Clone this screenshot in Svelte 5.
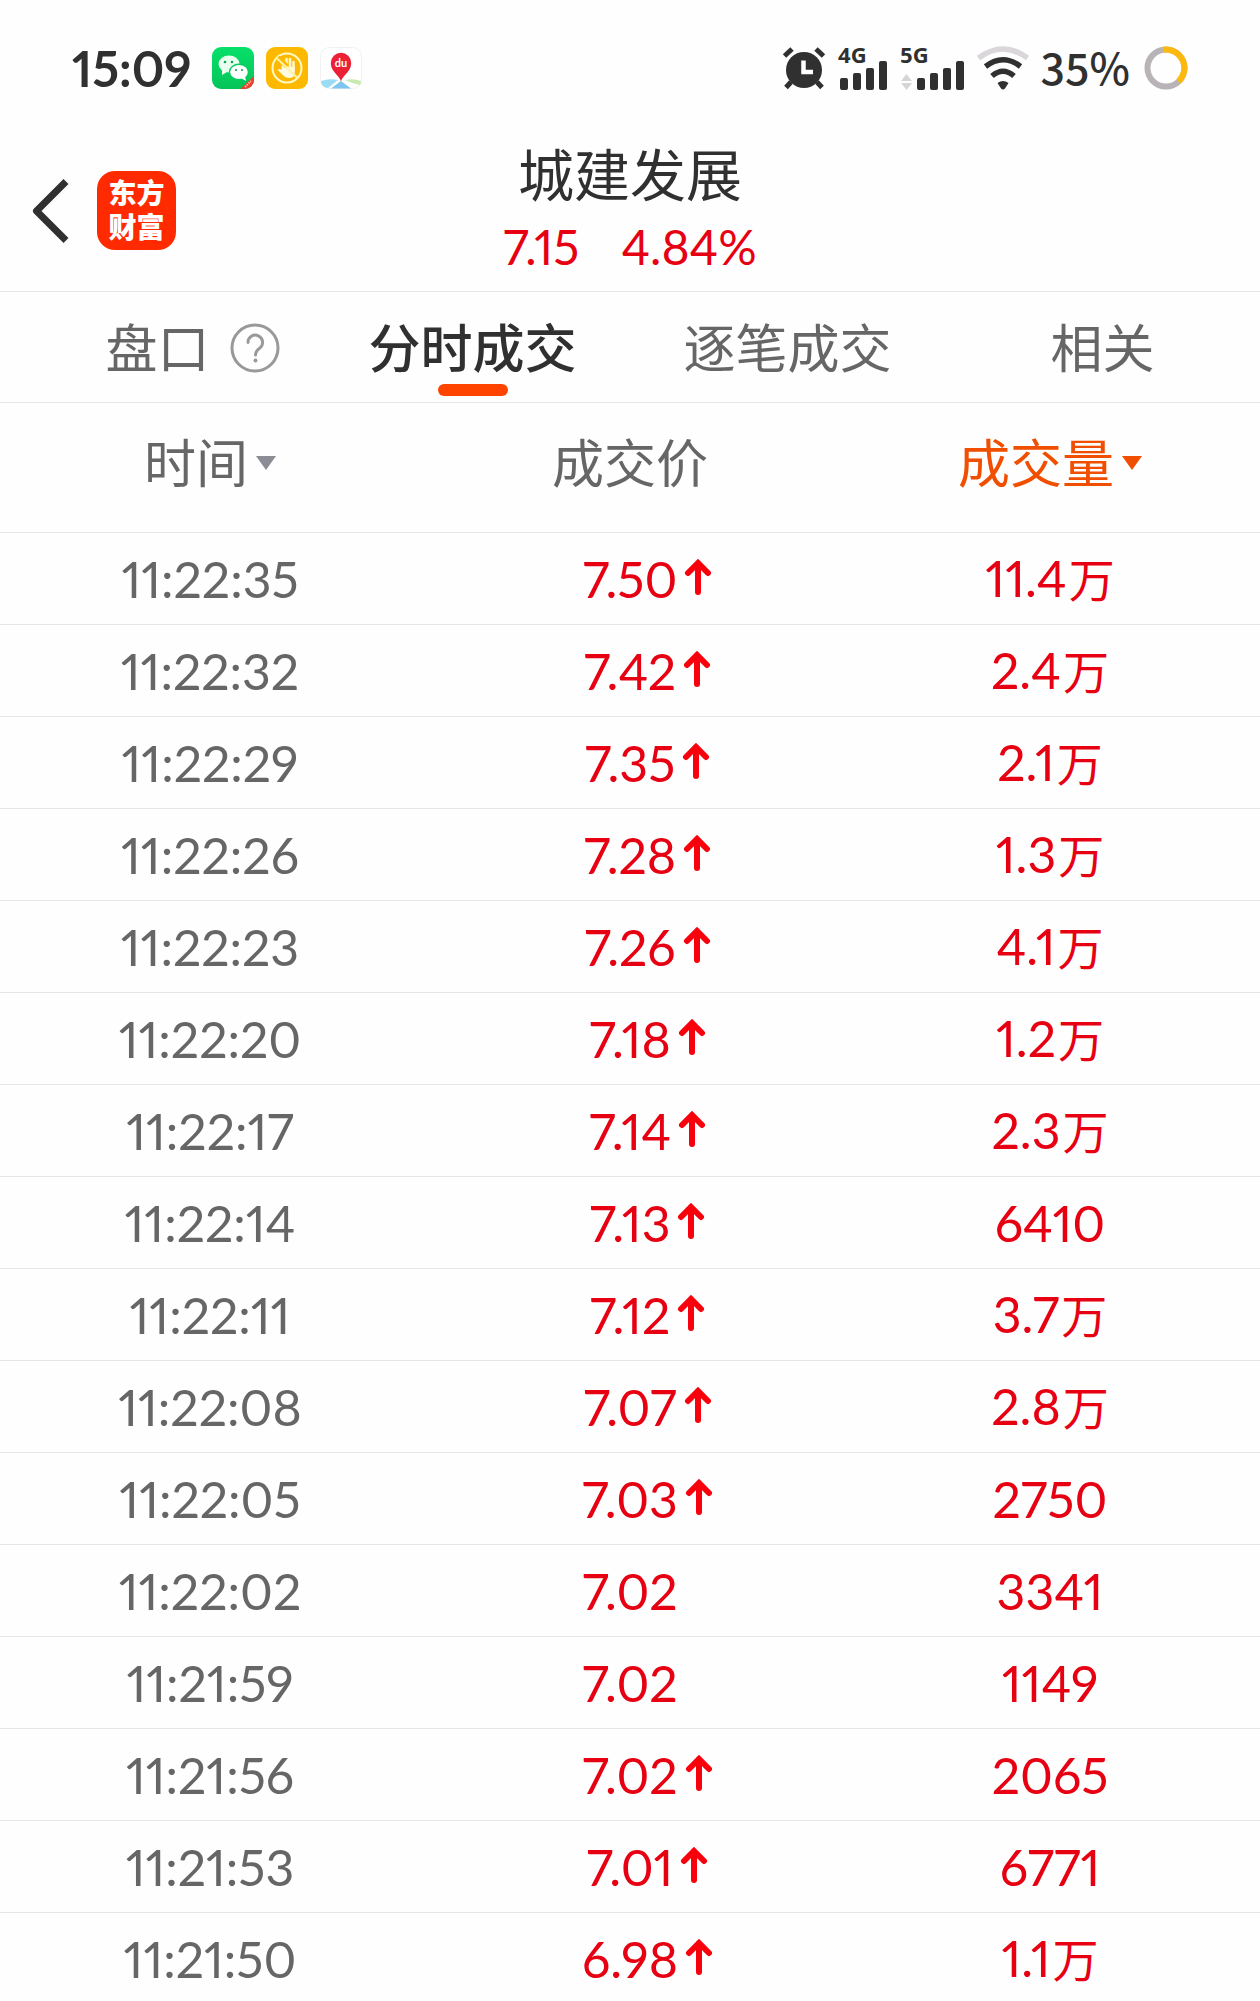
<script>
    const stock = { name: "城建发展", price: "7.15", change: "4.84%" };

    const tabs = [
        { label: "盘口", help: true },
        { label: "分时成交" },
        { label: "逐笔成交" },
        { label: "相关" },
    ];
    let active = 1;

    const columns = [
        { label: "时间", sortable: true },
        { label: "成交价", sortable: false },
        { label: "成交量", sortable: true },
    ];
    let sorted = 2;

    const trades = [
        { time: "11:22:35", price: "7.50", up: true, volume: "11.4", unit: "万" },
        { time: "11:22:32", price: "7.42", up: true, volume: "2.4", unit: "万" },
        { time: "11:22:29", price: "7.35", up: true, volume: "2.1", unit: "万" },
        { time: "11:22:26", price: "7.28", up: true, volume: "1.3", unit: "万" },
        { time: "11:22:23", price: "7.26", up: true, volume: "4.1", unit: "万" },
        { time: "11:22:20", price: "7.18", up: true, volume: "1.2", unit: "万" },
        { time: "11:22:17", price: "7.14", up: true, volume: "2.3", unit: "万" },
        { time: "11:22:14", price: "7.13", up: true, volume: "6410" },
        { time: "11:22:11", price: "7.12", up: true, volume: "3.7", unit: "万" },
        { time: "11:22:08", price: "7.07", up: true, volume: "2.8", unit: "万" },
        { time: "11:22:05", price: "7.03", up: true, volume: "2750" },
        { time: "11:22:02", price: "7.02", up: false, volume: "3341" },
        { time: "11:21:59", price: "7.02", up: false, volume: "1149" },
        { time: "11:21:56", price: "7.02", up: true, volume: "2065" },
        { time: "11:21:53", price: "7.01", up: true, volume: "6771" },
        { time: "11:21:50", price: "6.98", up: true, volume: "1.1", unit: "万" },
    ];
</script>

<div class="status">
    <div class="group">
        <span class="clock">15:09</span>
        <svg class="app" width="42" height="42" viewBox="0 0 42 42">
            <defs>
                <linearGradient id="green" x1="0" y1="0" x2="0" y2="1">
                    <stop offset="0" stop-color="#07e06a" />
                    <stop offset="1" stop-color="#04c458" />
                </linearGradient>
                <clipPath id="tile"><rect width="42" height="42" rx="9" /></clipPath>
            </defs>
            <g clip-path="url(#tile)">
                <rect width="42" height="42" fill="url(#green)" />
                <ellipse cx="17" cy="17" rx="10.5" ry="8.5" fill="#e9ffef" />
                <path d="M10 22l0 6 5-3z" fill="#e9ffef" />
                <ellipse cx="27" cy="25" rx="9.5" ry="7.8" fill="#fff" stroke="#05cd5d" stroke-width="1.4" />
                <path d="M29 31l5 3-1-5z" fill="#fff" />
                <g fill="#0aa54d">
                    <circle cx="13" cy="15" r="1.3" />
                    <circle cx="20" cy="15" r="1.3" />
                    <circle cx="24" cy="23" r="1.1" />
                    <circle cx="30" cy="23" r="1.1" />
                </g>
                <path d="M28 42L42 29V42z" fill="#e8402c" />
                <path d="M33 40l6-6" stroke="#ffb9a8" stroke-width="2" stroke-dasharray="1.5 1" />
            </g>
        </svg>
        <svg class="app" width="42" height="42" viewBox="0 0 42 42">
            <rect width="42" height="42" rx="9" fill="#fdb900" />
            <g fill="none" stroke="#fff8c8" stroke-linecap="round">
                <circle cx="21" cy="21" r="14.5" stroke-width="2" />
                <path d="M17 22V14M20.5 21V12M24 21V12M27.5 22V15" stroke-width="2.6" />
            </g>
            <path d="M15.8 20h13v5q0 6-5.5 6-4 0-6.500-3l-5-5q1-2 4 0z" fill="#fffbe0" />
            <path d="M11.500 10.500L21 19.500" stroke="#fdb900" stroke-width="5" />
            <path d="M10.500 11L31.500 31" stroke="#fff3a8" stroke-width="2" />
        </svg>
        <svg class="app" width="42" height="42" viewBox="0 0 42 42">
            <rect x=".5" y=".5" width="41" height="41" rx="9" fill="#fff" stroke="#f1f1f1" />
            <path d="M1 34q8-3 17-1L8 41Q1 40 1 34z" fill="#9bdcf5" />
            <path d="M25 33q9-2 16 1 0 3-1 4-6-1-15-5z" fill="#c6eab2" />
            <path d="M21 34l10 7.5H11z" fill="#7cc6f0" />
            <path d="M21 34.5C20 29 10.800 25 10.800 16a10.200 10.200 0 0 1 20.400 0C31.200 25 22 29 21 34.500z" fill="#ec2136" />
            <text x="21" y="20" class="pin">du</text>
        </svg>
    </div>

    <div class="group">
        <svg class="alarm" width="44" height="44" viewBox="0 0 44 44" fill="none" stroke="#303030">
            <path d="M2.500 10L10 3M34 3l7.500 7" stroke-width="5" />
            <path d="M9 36l-5 5.500M35 36l5 5.500" stroke-width="5" />
            <circle cx="22" cy="24" r="18" fill="#303030" stroke="none" />
            <path d="M21.500 14.500V26H31" stroke="#fff" stroke-width="4.500" />
        </svg>
        <svg class="cell" width="50" height="64" viewBox="0 -10 50 64" fill="#303030">
            <text x="0" y="17" class="net">4G</text>
            <rect x="2" y="32" width="8" height="12" rx="2" />
            <rect x="15" y="27" width="8" height="17" rx="2" />
            <rect x="28" y="22" width="8" height="22" rx="2" />
            <rect x="41" y="15" width="8" height="29" rx="2" />
        </svg>
        <svg class="cell" width="65" height="64" viewBox="0 -10 65 64" fill="#303030">
            <text x="0" y="17" class="net">5G</text>
            <path d="M1 35L6.500 28 12 35zM1 37L6.500 44 12 37z" fill="#d5d5d5" />
            <rect x="17" y="32" width="8" height="12" rx="2" />
            <rect x="30" y="27" width="8" height="17" rx="2" />
            <rect x="43" y="22" width="8" height="22" rx="2" />
            <rect x="56" y="15" width="8" height="29" rx="2" />
        </svg>
        <svg class="wifi" width="52" height="44" viewBox="0 0 52 44" fill="none" stroke="#303030" stroke-width="5.5">
            <path d="M1.500 12Q26-6 50.500 12" stroke="#dad6da" />
            <path d="M8.500 20.500Q26 7 43.500 20.500" />
            <path d="M15 30Q26 20.500 37 30" />
            <path d="M20.500 37q5.500-4 11 0L28 42.500q-2 2-4 0z" fill="#303030" stroke="none" />
        </svg>
        <span class="battery">35%</span>
        <svg width="44" height="44" viewBox="0 0 44 44" fill="none" stroke-width="6">
            <circle cx="22" cy="22" r="18.5" stroke="#b7b3b6" />
            <path d="M19 3.700A18.500 18.500 0 0 1 34.500 35.500" stroke="#fdb90b" />
        </svg>
    </div>
</div>

<header>
    <button class="back" aria-label="返回">
        <svg width="38" height="66" viewBox="0 0 38 66" fill="none" stroke="#303030" stroke-width="7" stroke-linejoin="round">
            <path d="M34 3.500L4.500 33 34 62.500" />
        </svg>
    </button>
    <a class="logo" href="#home">东方<br />财富</a>
    <div class="stock">
        <h1>{stock.name}</h1>
        <p>
            <span>{stock.price}</span>
            <span>{stock.change}</span>
        </p>
    </div>
</header>

<nav>
    {#each tabs as tab, i}
        <button class:active={i === active} on:click={() => (active = i)}>
            {tab.label}{#if tab.help}<svg class="help" width="50" height="50" viewBox="0 0 50 50" fill="none" stroke="#999" stroke-width="3">
                    <circle cx="25" cy="25" r="23" />
                    <path d="M18 19.500a7.300 7.300 0 1 1 12 5.500q-4.500 3-4.500 7" stroke-linecap="round" />
                    <circle cx="25.5" cy="37.500" r="2" fill="#999" stroke="none" />
                </svg>{/if}
        </button>
    {/each}
</nav>

<table>
    <thead>
        <tr>
            {#each columns as column, i}
                <th class:sorted={i === sorted}>
                    {#if column.sortable}
                        <button on:click={() => (sorted = i)}>
                            {column.label}
                            <svg width="20" height="14" viewBox="0 0 20 14" fill="currentColor">
                                <path d="M0 0h20L10 14z" />
                            </svg>
                        </button>
                    {:else}
                        {column.label}
                    {/if}
                </th>
            {/each}
        </tr>
    </thead>
    <tbody>
        {#each trades as trade}
            <tr>
                <td>{trade.time}</td>
                <td class="red">
                    {trade.price}{#if trade.up}<svg class="up" width="28" height="38" viewBox="0 0 28 38" fill="none" stroke="#f8000c" stroke-width="6" stroke-linecap="round">
                            <path d="M14 4v29M4 14L14 4l10 10" />
                        </svg>{/if}
                </td>
                <td class="red">
                    {trade.volume}{#if trade.unit}<span class="unit">{trade.unit}</span>{/if}
                </td>
            </tr>
        {/each}
    </tbody>
</table>

<style>
    :global(body) {
        background: #fefefe;
        color: #303030;
        font-family: Lato, "Noto Sans CJK SC", sans-serif;
        font-variant-numeric: proportional-nums;
    }
    button {
        border: none;
        background: none;
        padding: 0;
        font: inherit;
        color: inherit;
        cursor: pointer;
    }
    svg {
        flex: none;
    }

    .status {
        display: flex;
        align-items: center;
        justify-content: space-between;
        height: 136px;
        padding: 0 72px;
    }
    .group {
        display: flex;
        align-items: center;
    }
    .clock {
        font-size: 49px;
        font-weight: 700;
        line-height: 60px;
        margin-right: 8px;
    }
    .app {
        margin-left: 12px;
    }
    .pin {
        font-size: 11px;
        font-weight: 700;
        fill: #fff;
        text-anchor: middle;
    }
    .net {
        font-family: "Noto Sans", sans-serif;
        font-size: 22px;
        font-weight: 700;
    }
    .alarm,
    .cell,
    .wifi {
        margin-right: 12px;
    }
    .battery {
        padding-bottom: 4px;
        font-family: "Noto Sans CJK SC", sans-serif;
        font-size: 43px;
        font-weight: 500;
        line-height: 60px;
        margin-right: 14px;
    }

    header {
        display: grid;
        grid-template-columns: auto 1fr auto;
        align-items: center;
        height: 149px;
        padding: 0 32px 6px;
        border-bottom: 1px solid #e6e6e6;
    }
    .back {
        grid-area: 1 / 1;
        display: flex;
        z-index: 1;
    }
    .logo {
        grid-area: 1 / 2;
        z-index: 1;
        width: 79px;
        margin-left: 27px;
        padding: 5px 0 6px;
        box-sizing: border-box;
        border-radius: 18px;
        background: #ff2a00;
        color: #fff;
        font-size: 28px;
        font-weight: 900;
        line-height: 34px;
        text-align: center;
        text-decoration: none;
    }
    .stock {
        grid-area: 1 / 1 / 2 / 4;
        text-align: center;
    }
    h1 {
        margin: 0;
        font-size: 56px;
        font-weight: 400;
        line-height: 72px;
    }
    p {
        display: flex;
        justify-content: center;
        gap: 42px;
        margin: 0;
        color: #e60012;
        font-size: 48px;
        line-height: 72px;
    }

    nav {
        display: grid;
        grid-template-columns: repeat(4, 1fr);
        border-bottom: 1px solid #e6e6e6;
    }
    nav button {
        position: relative;
        height: 110px;
        padding-bottom: 4px;
        color: #666;
        font-size: 52px;
        white-space: nowrap;
    }
    nav .active {
        color: #303030;
        font-weight: 500;
    }
    nav .active::after {
        content: "";
        position: absolute;
        left: 50%;
        bottom: 6px;
        width: 70px;
        height: 12px;
        margin-left: -35px;
        border-radius: 6px;
        background: #ff4400;
    }
    /* hangs outside the label, which stays centred */
    .help {
        margin: 0 -70px 0 20px;
        vertical-align: -5px;
    }

    table {
        width: 100%;
        table-layout: fixed;
        border-spacing: 0;
        text-align: center;
        color: #666;
    }
    th,
    td {
        padding: 0;
        border-bottom: 1px solid #e6e6e6;
        white-space: nowrap;
    }
    th {
        height: 119px;
        padding-bottom: 10px;
        font-size: 52px;
        font-weight: 400;
        line-height: 72px;
    }
    th button {
        display: inline-flex;
        align-items: center;
        gap: 8px;
    }
    th svg {
        color: #8c8c94;
    }
    .sorted,
    .sorted svg {
        color: #f04e00;
    }
    td {
        height: 91px;
        font-size: 50px;
        line-height: 60px;
    }
    .red {
        color: #e60012;
    }
    .unit {
        margin-left: 2px;
        font-size: 46px;
    }
    .up {
        margin: 0 -35px 0 7px;
        vertical-align: 1px;
    }
</style>
